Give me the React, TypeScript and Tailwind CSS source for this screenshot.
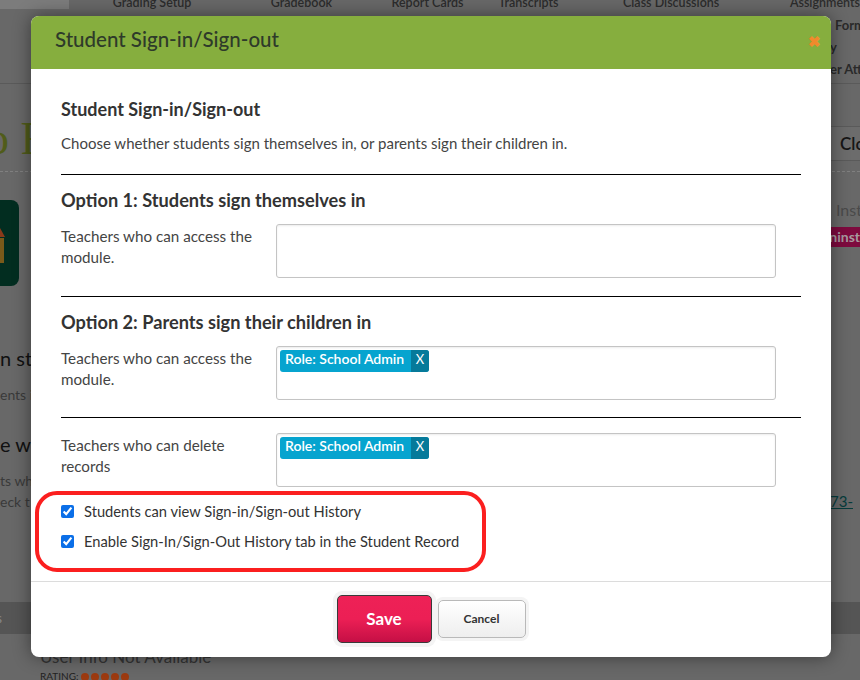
const font = "font-['Lato','Liberation_Sans',sans-serif]";

function Chip() {
  return (
    <div className="flex h-[22px] w-[149px] rounded-[3px] bg-[#06a4cf] text-[14px] font-semibold text-white">
      <span className="flex-1 pl-[5px] leading-[18px]">Role: School Admin</span>
      <span className="flex h-full w-[18px] items-center justify-center rounded-r-[3px] bg-[#067a9a] pb-[2px] text-[13px] font-normal">X</span>
    </div>
  );
}

function TagBox({ chip }: { chip?: boolean }) {
  return (
    <div className="h-[54px] w-[500px] rounded-[3px] border border-[#c4c4c4] bg-white p-[3px] shadow-[inset_0_1px_2px_rgba(0,0,0,0.08)]">
      {chip && <Chip />}
    </div>
  );
}

function Field({ label, chip }: { label: string; chip?: boolean }) {
  return (
    <div className="flex">
      <div className="w-[215px] pr-4 pt-[2px] text-[15.2px] leading-[21px] text-[#444]">{label}</div>
      <TagBox chip={chip} />
    </div>
  );
}

function CheckRow({ label }: { label: string }) {
  return (
    <label className="flex h-[30px] items-center gap-[10px] pl-[61px] text-[14.7px] text-[#333]">
      <input type="checkbox" defaultChecked className="size-[13px] accent-[#0b6fe8]" />
      {label}
    </label>
  );
}

function Backdrop() {
  return (
    <div className="h-[680px] w-[860px] overflow-hidden whitespace-nowrap bg-[#686868] text-[#2a2a2a]">
      {/* page behind the overlay */}
      <div className="h-[84px] border-b border-[#5a5a5a]">
        <div className="flex h-[9px] text-[12.5px] font-semibold leading-[5px] text-[#2c2c2c]">
          <div className="h-[9px] w-[70px] bg-[#7c7c7c]" />
          <span className="ml-[44px] w-[161px]">Grading Setup</span>
          <span className="w-[123px]">Gradebook</span>
          <span className="w-[109px]">Report Cards</span>
          <span className="w-[127px]">Transcripts</span>
          <span className="w-[170px]">Class Discussions</span>
          <span>Assignments</span>
        </div>
        <div className="ml-[830px] pt-[5px] text-[13px] font-bold leading-[22px]">
          <div className="pl-[5px]">Form</div>
          <div>y</div>
          <div>er Atte</div>
        </div>
      </div>
      <div className="flex h-[88px] items-start justify-between border-b border-dashed border-[#808080]">
        <div className="ml-[-14px] mt-[32px] font-['Liberation_Serif',serif] text-[46px] leading-none text-[#505c1a]">o F</div>
        <div className="mt-[42px] h-[35px] w-[29px] border-y border-[#5a5a5a] bg-[#6c6c6c] pl-[9px] text-[17px] font-semibold leading-[33px] text-[#161616]">Clo</div>
      </div>
      <div className="flex h-[120px] justify-between pt-[28px]">
        <div className="flex h-[86px] w-[19px] flex-col rounded-r-[8px] bg-[#022d20] pt-[28px]">
          <svg width="6" height="36" viewBox="0 0 6 36">
            <path d="M0 0 L5 9 L0 9 Z" fill="#8a3a1a" />
            <rect x="0" y="10" width="4" height="25" fill="#7a5a1a" />
          </svg>
        </div>
        <div className="w-[29px] text-[16px] text-[#4a4a4a]">
          <div className="pl-[5px] leading-[20px]">Inst</div>
          <div className="mt-[7px] flex h-[20px] justify-end bg-[#7e0a3e] text-[14px] font-bold leading-[20px] text-[#a89a9f]">Uninst</div>
        </div>
      </div>
      <div className="h-[310px] pt-[52px]">
        <div className="text-[20px] leading-[28px] text-[#111]">n stu</div>
        <div className="mt-[13px] text-[14px] leading-[20px] text-[#3a3a3a]">ents i</div>
        <div className="mt-[25px] text-[20px] leading-[28px] text-[#111]">e wh</div>
        <div className="mt-[12px] text-[14px] leading-[21px] text-[#3a3a3a]">ts wh</div>
        <div className="flex justify-between text-[14px] leading-[21px] text-[#3a3a3a]">
          <span>eck t</span>
          <span className="mr-[7px] text-[15px] text-[#063c3c] underline">73-</span>
        </div>
      </div>
      <div className="h-[32px] bg-[#555] text-[14px] leading-[32px] text-[#888]">
        <span className="ml-[-4px]">s</span>
      </div>
      <div className="pl-[40px] pt-[12px]">
        <div className="text-[17px] leading-[22px] text-[#333]">User Info Not Available</div>
        <div className="flex items-center gap-[2px] text-[10px] leading-[17px] text-[#222]">
          <span className="mr-[1px]">RATING:</span>
          {[0, 1, 2, 3, 4].map((i) => (
            <span key={i} className="size-[8px] rounded-full bg-[#9c3a10]" />
          ))}
        </div>
      </div>
    </div>
  );
}

export default function App() {
  return (
    <div className={`relative h-[680px] w-[860px] overflow-hidden ${font}`}>
      <Backdrop />

      {/* modal */}
      <div className="absolute left-[31px] top-[16px] h-[641px] w-[800px] overflow-hidden rounded-[8px] bg-white shadow-[0_0_18px_rgba(0,0,0,0.45)]">
        <div className="flex h-[53px] items-center justify-between bg-[#86ae3e] pl-[24px] pr-[10px]">
          <h1 className="mt-[-6px] text-[20.5px] font-medium text-[#2e3a2a]">Student Sign-in/Sign-out</h1>
          <span className="mt-[-2px] text-[15px] font-black text-[#f08a2c]">✖</span>
        </div>

        <div className="px-[30px] pt-[30px]">
          <h2 className="text-[18px] font-bold leading-[20px] text-[#333]">Student Sign-in/Sign-out</h2>
          <p className="mt-[14px] text-[15px] leading-[20px] text-[#444]">
            Choose whether students sign themselves in, or parents sign their children in.
          </p>
          <div className="mt-[21px] w-[740px] border-t border-black" />

          <h3 className="mt-[15px] text-[18.2px] font-bold leading-[20px] text-[#333]">Option 1: Students sign themselves in</h3>
          <div className="mt-[14px]"><Field label="Teachers who can access the module." /></div>
          <div className="mt-[18px] w-[740px] border-t border-black" />

          <h3 className="mt-[15px] text-[18.2px] font-bold leading-[20px] text-[#333]">Option 2: Parents sign their children in</h3>
          <div className="mt-[14px]"><Field label="Teachers who can access the module." chip /></div>
          <div className="mt-[17px] w-[740px] border-t border-black" />
          <div className="mt-[15px]"><Field label="Teachers who can delete records" chip /></div>
        </div>

        <div className="mt-[9px] -translate-x-[31px]">
          <CheckRow label="Students can view Sign-in/Sign-out History" />
          <CheckRow label="Enable Sign-In/Sign-Out History tab in the Student Record" />
        </div>

        <div className="mt-[25px] flex h-[76px] items-center justify-center gap-[6px] border-t border-[#dcdcdc]">
          <button className="mt-[-2px] h-[48px] w-[95px] rounded-[5px] border border-[#3a3a3a] bg-gradient-to-b from-[#ee2156] via-[#ec1f55] to-[#c50f45] text-[17px] font-bold text-white ring-[4px] ring-[#f4f4f4]">Save</button>
          <button className="mt-[-2px] h-[38px] w-[88px] rounded-[5px] border border-[#b9b9b9] bg-gradient-to-b from-white to-[#eeeeee] text-[12px] font-bold text-[#333] ring-[3px] ring-[#f4f4f4]">Cancel</button>
        </div>
      </div>

      {/* red annotation drawn over the screenshot */}
      <div className="absolute left-[35px] top-[491px] h-[81px] w-[451px] rounded-[22px] border-[4px] border-[#fb1f1f]" />
    </div>
  );
}
